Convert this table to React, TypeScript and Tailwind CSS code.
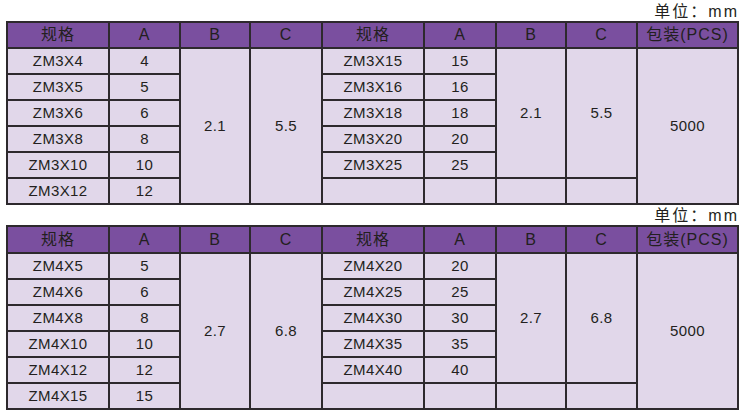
const font = { fontFamily: '"Liberation Sans", "Noto Sans CJK SC", sans-serif' };

type Half = { rows: [string, string][]; b: string; c: string };
type Spec = { left: Half; right: Half; pcs: string };

const tables: Spec[] = [
  {
    left: {
      rows: [
        ["ZM3X4", "4"],
        ["ZM3X5", "5"],
        ["ZM3X6", "6"],
        ["ZM3X8", "8"],
        ["ZM3X10", "10"],
        ["ZM3X12", "12"],
      ],
      b: "2.1",
      c: "5.5",
    },
    right: {
      rows: [
        ["ZM3X15", "15"],
        ["ZM3X16", "16"],
        ["ZM3X18", "18"],
        ["ZM3X20", "20"],
        ["ZM3X25", "25"],
      ],
      b: "2.1",
      c: "5.5",
    },
    pcs: "5000",
  },
  {
    left: {
      rows: [
        ["ZM4X5", "5"],
        ["ZM4X6", "6"],
        ["ZM4X8", "8"],
        ["ZM4X10", "10"],
        ["ZM4X12", "12"],
        ["ZM4X15", "15"],
      ],
      b: "2.7",
      c: "6.8",
    },
    right: {
      rows: [
        ["ZM4X20", "20"],
        ["ZM4X25", "25"],
        ["ZM4X30", "30"],
        ["ZM4X35", "35"],
        ["ZM4X40", "40"],
      ],
      b: "2.7",
      c: "6.8",
    },
    pcs: "5000",
  },
];

const widths = [102, 71, 70, 72, 102, 72, 70, 71, 101];
const td = "border-2 border-[#2d292d] bg-[#e1d7ea] text-center align-middle p-0 text-[15px] tracking-[0.4px] text-[#231f20]";
const th = "border-2 border-[#2d292d] bg-[#7a4f9f] text-center align-middle p-0 font-normal text-[16px] tracking-[1px] text-[#231f20]";

function UnitLabel({ h }: { h: string }) {
  return (
    <div className={`${h} flex items-end justify-end pr-[11px] pb-[1px] text-[16px] tracking-[2px] text-[#231f20] leading-none`}>
      单位：mm
    </div>
  );
}

function SpecTable({ spec, headH }: { spec: Spec; headH: number }) {
  const { left, right } = spec;
  return (
    <table className="border-collapse table-fixed w-[731px]">
      <colgroup>
        {widths.map((w, i) => (
          <col key={i} style={{ width: w }} />
        ))}
      </colgroup>
      <thead>
        <tr style={{ height: headH }}>
          <th className={th}>规格</th>
          <th className={th}>A</th>
          <th className={th}>B</th>
          <th className={th}>C</th>
          <th className={th}>规格</th>
          <th className={th}>A</th>
          <th className={th}>B</th>
          <th className={th}>C</th>
          <th className={th + " tracking-[0.5px]"}>包装(PCS)</th>
        </tr>
      </thead>
      <tbody>
        {left.rows.map(([name, a], i) => {
          const r = right.rows[i];
          return (
            <tr key={i} className="h-[26px]">
              <td className={td}>{name}</td>
              <td className={td}>{a}</td>
              {i === 0 && (
                <>
                  <td rowSpan={6} className={td}>{left.b}</td>
                  <td rowSpan={6} className={td}>{left.c}</td>
                </>
              )}
              <td className={td}>{r ? r[0] : ""}</td>
              <td className={td}>{r ? r[1] : ""}</td>
              {i === 0 && (
                <>
                  <td rowSpan={5} className={td}>{right.b}</td>
                  <td rowSpan={5} className={td}>{right.c}</td>
                </>
              )}
              {i === 5 && (
                <>
                  <td className={td}></td>
                  <td className={td}></td>
                </>
              )}
              {i === 0 && (
                <td rowSpan={6} className={td}>{spec.pcs}</td>
              )}
            </tr>
          );
        })}
      </tbody>
    </table>
  );
}

export default function App() {
  return (
    <div className="w-[750px] h-[411px] bg-white pl-[6px] overflow-hidden" style={font}>
      <UnitLabel h="h-[21px]" />
      <SpecTable spec={tables[0]} headH={26} />
      <UnitLabel h="h-[20px]" />
      <SpecTable spec={tables[1]} headH={27} />
    </div>
  );
}
